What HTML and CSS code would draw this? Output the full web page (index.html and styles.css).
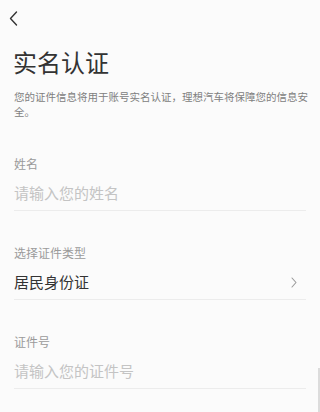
FILE: index.html
```html
<!DOCTYPE html>
<html lang="zh-CN">
<head>
<meta charset="utf-8">
<link rel="stylesheet" href="styles.css">
</head>
<body>
<div class="page">
  <div class="nav">
    <svg class="back" width="9" height="15" viewBox="0 0 9 15"><path d="M7.5 1 L1.5 7.5 L7.5 14" fill="none" stroke="#333" stroke-width="1.4" stroke-linecap="round" stroke-linejoin="round"/></svg>
  </div>
  <h1 class="title">实名认证</h1>
  <p class="desc">您的证件信息将用于账号实名认证，理想汽车将保障您的信息安全。</p>
  <div class="field field-first">
    <div class="label">姓名</div>
    <div class="input placeholder">请输入您的姓名</div>
  </div>
  <div class="field">
    <div class="label">选择证件类型</div>
    <div class="input select">
      <span class="value">居民身份证</span>
      <svg class="chev" width="6" height="11" viewBox="0 0 6 11"><path d="M1 1 L5 5.5 L1 10" fill="none" stroke="#999" stroke-width="1.1" stroke-linecap="round" stroke-linejoin="round"/></svg>
    </div>
  </div>
  <div class="field">
    <div class="label">证件号</div>
    <div class="input placeholder">请输入您的证件号</div>
  </div>
  <div class="scrollbar"></div>
</div>
</body>
</html>
```
FILE: styles.css
```css
html, body {
  margin: 0;
  padding: 0;
  background: #fbfbfb;
}
body {
  font-family: "Noto Sans CJK SC", "Noto Sans", sans-serif;
  color: #333;
}
.page {
  width: 320px;
  height: 412px;
  overflow: hidden;
  position: relative;
}
.nav {
  height: 45px;
  padding-left: 9px;
  padding-top: 11px;
  box-sizing: border-box;
}
.back {
  display: block;
}
.title {
  margin: 0;
  padding-left: 13px;
  font-size: 24px;
  font-weight: 400;
  line-height: 34px;
  color: #333;
  letter-spacing: 0;
}
.desc {
  margin: 10px 0 0;
  padding: 0 10px 0 14px;
  font-size: 10.5px;
  line-height: 15px;
  color: #808080;
}
.field {
  margin: 33px 14px 0 14px;
  border-bottom: 1px solid #ececec;
  padding-bottom: 6px;
}
.field-first {
  margin-top: 36px;
}
.label {
  font-size: 12px;
  line-height: 17px;
  color: #9a9a9a;
}
.input {
  margin-top: 10px;
  font-size: 15px;
  line-height: 22px;
}
.placeholder {
  color: #c4c4c4;
}
.select {
  display: flex;
  justify-content: space-between;
  align-items: center;
}
.value {
  color: #333;
}
.chev {
  display: block;
  margin-right: 9px;
}
.scrollbar {
  position: absolute;
  right: 0;
  top: 368px;
  width: 2px;
  height: 44px;
  background: #dcdcdc;
}
```
